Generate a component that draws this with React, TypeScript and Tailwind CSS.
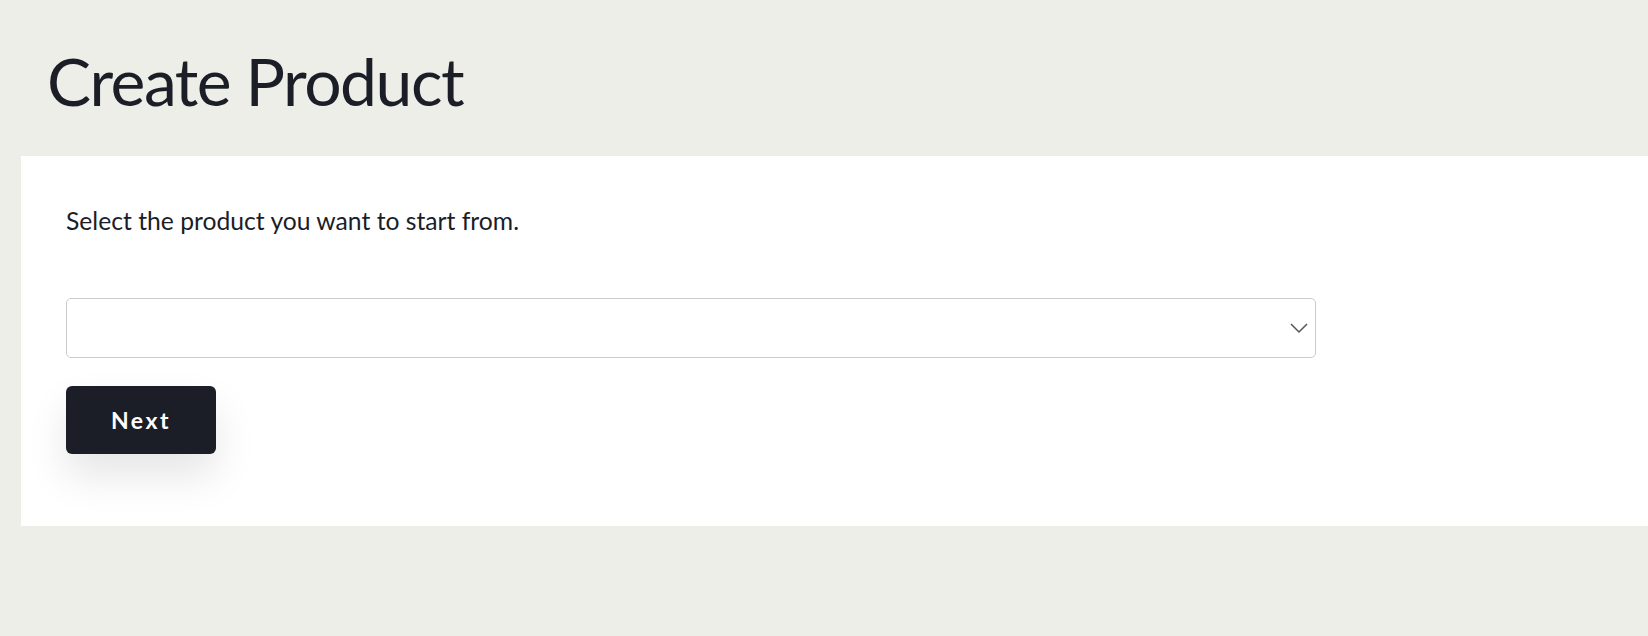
export default function App() {
  return (
    <div className="min-h-screen bg-[#eeeee9] font-['Lato',sans-serif] text-[#1b1e27]">
      {/* 見出し */}
      <h1 className="pl-[47px] pt-[45px] text-[66px] font-normal leading-[72px] tracking-[-1.5px]">
        Create Product
      </h1>

      {/* パネル */}
      <div className="ml-[21px] mt-[39px] bg-white pl-[45px] pt-[49px] pb-[72px]">
        <p className="text-[24.7px] leading-[32px]">
          Select the product you want to start from.
        </p>

        <div className="relative mt-[61px] h-[60px] w-[1250px] rounded-[5px] border border-[#cccccc] bg-white">
          <svg
            className="absolute right-[7px] top-1/2 -translate-y-1/2"
            width="18"
            height="11"
            viewBox="0 0 18 11"
            fill="none"
          >
            <path d="M1 1.5 L9 9.5 L17 1.5" stroke="#555555" strokeWidth="1.5" />
          </svg>
        </div>

        <button
          type="button"
          className="mt-[28px] flex h-[68px] w-[150px] items-center justify-center rounded-[6px] bg-[#1b1e27] text-[23px] font-bold tracking-[2.5px] text-white shadow-[0_22px_40px_rgba(0,0,0,0.1)]"
        >
          Next
        </button>
      </div>
    </div>
  );
}
